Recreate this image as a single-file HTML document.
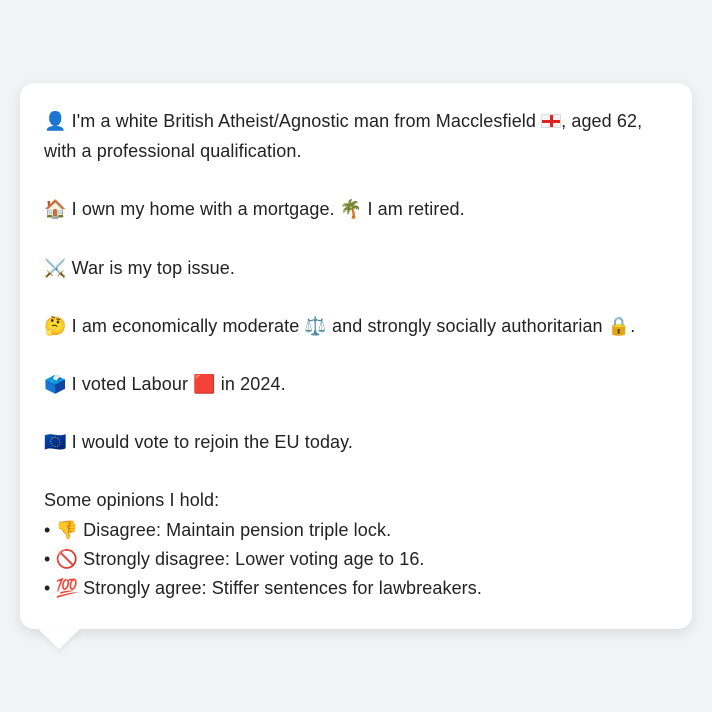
<!DOCTYPE html>
<html><head><meta charset="utf-8"><style>
html,body{margin:0;padding:0;width:712px;height:712px;background:#f2f3f5;overflow:hidden}
.card{position:absolute;left:20px;top:83px;width:672px;height:546px;background:#fff;border-radius:14px;box-shadow:0 4px 12px rgba(0,0,0,0.10)}
.tail{position:absolute;left:38px;top:629px;width:0;height:0;border-left:21px solid transparent;border-right:21px solid transparent;border-top:20px solid #fff;filter:drop-shadow(0 3px 3px rgba(0,0,0,0.06))}
.t{position:absolute;left:44px;font-family:"Liberation Sans","Noto Sans CJK JP",sans-serif;font-size:18px;letter-spacing:0.1px;color:#222;white-space:nowrap;line-height:20px}
.eng{display:inline-block;width:20px;height:14px;vertical-align:-1px;background:linear-gradient(#d22,#d22) center/20px 3px no-repeat,linear-gradient(#d22,#d22) center/3px 14px no-repeat,#f4f4f4;border:1px solid #ddd;box-sizing:border-box}
</style></head><body>
<div class="card"></div><div class="tail"></div>
<div class="t" style="top:111px">👤 I'm a white British Atheist/Agnostic man from Macclesfield <span class="eng"></span>, aged 62,</div>
<div class="t" style="top:141px">with a professional qualification.</div>
<div class="t" style="top:199px">🏠 I own my home with a mortgage. 🌴 I am retired.</div>
<div class="t" style="top:258px">⚔️ War is my top issue.</div>
<div class="t" style="top:316px">🤔 I am economically moderate ⚖️ and strongly socially authoritarian 🔒.</div>
<div class="t" style="top:374px">🗳️ I voted Labour 🟥 in 2024.</div>
<div class="t" style="top:432px">🇪🇺 I would vote to rejoin the EU today.</div>
<div class="t" style="top:490px">Some opinions I hold:</div>
<div class="t" style="top:520px">• 👎 Disagree: Maintain pension triple lock.</div>
<div class="t" style="top:549px">• 🚫 Strongly disagree: Lower voting age to 16.</div>
<div class="t" style="top:578px">• 💯 Strongly agree: Stiffer sentences for lawbreakers.</div>
</body></html>
